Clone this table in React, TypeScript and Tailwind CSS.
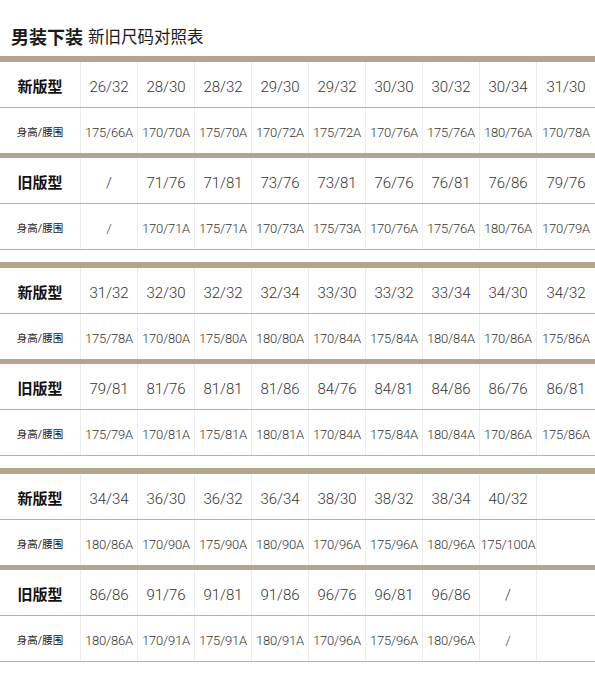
import React from "react";

type Section = {
  newSizes: string[];
  newBody: string[];
  oldSizes: string[];
  oldBody: string[];
};

const sections: Section[] = [
  {
    newSizes: ["26/32", "28/30", "28/32", "29/30", "29/32", "30/30", "30/32", "30/34", "31/30"],
    newBody: ["175/66A", "170/70A", "175/70A", "170/72A", "175/72A", "170/76A", "175/76A", "180/76A", "170/78A"],
    oldSizes: ["/", "71/76", "71/81", "73/76", "73/81", "76/76", "76/81", "76/86", "79/76"],
    oldBody: ["/", "170/71A", "175/71A", "170/73A", "175/73A", "170/76A", "175/76A", "180/76A", "170/79A"],
  },
  {
    newSizes: ["31/32", "32/30", "32/32", "32/34", "33/30", "33/32", "33/34", "34/30", "34/32"],
    newBody: ["175/78A", "170/80A", "175/80A", "180/80A", "170/84A", "175/84A", "180/84A", "170/86A", "175/86A"],
    oldSizes: ["79/81", "81/76", "81/81", "81/86", "84/76", "84/81", "84/86", "86/76", "86/81"],
    oldBody: ["175/79A", "170/81A", "175/81A", "180/81A", "170/84A", "175/84A", "180/84A", "170/86A", "175/86A"],
  },
  {
    newSizes: ["34/34", "36/30", "36/32", "36/34", "38/30", "38/32", "38/34", "40/32", ""],
    newBody: ["180/86A", "170/90A", "175/90A", "180/90A", "170/96A", "175/96A", "180/96A", "175/100A", ""],
    oldSizes: ["86/86", "91/76", "91/81", "91/86", "96/76", "96/81", "96/86", "/", ""],
    oldBody: ["180/86A", "170/91A", "175/91A", "180/91A", "170/96A", "175/96A", "180/96A", "/", ""],
  },
];

const Row = ({ label, values, body }: { label: string; values: string[]; body?: boolean }) => {
  const pad = body ? "pt-[4px]" : "pt-[6px]";
  return (
    <div className="flex h-[45px]">
      <div className={`w-[81px] shrink-0 border-r border-[#ececec] flex items-center justify-center ${pad}`}>
        {body ? (
          <span className="text-[10.5px] text-[#222]">{label}</span>
        ) : (
          <span className="text-[15px] font-bold text-[#111]">{label}</span>
        )}
      </div>
      {values.map((v, i) => (
        <div
          key={i}
          className={
            i === values.length - 1
              ? `flex-1 flex items-center justify-center whitespace-nowrap ${pad}`
              : `w-[57px] shrink-0 border-r border-[#ececec] flex items-center justify-center whitespace-nowrap ${pad}`
          }
        >
          <span className={body ? "text-[13px] font-light text-[#333] tracking-[-0.2px]" : "text-[15px] font-light text-[#333]"}>
            {v}
          </span>
        </div>
      ))}
    </div>
  );
};

export default function App() {
  return (
    <div className="w-[595px] h-[682px] bg-white font-['Roboto','Noto_Sans_CJK_SC',sans-serif] overflow-hidden">
      {/* title */}
      <div className="h-[56px] flex items-center gap-[5px] pl-[11px] pt-[17px] text-[#1a1a1a]">
        <span className="text-[18px] font-bold font-['Noto_Sans_CJK_SC',sans-serif]">男装下装</span>
        <span className="text-[16.5px] font-['Noto_Sans_CJK_SC',sans-serif]">新旧尺码对照表</span>
      </div>

      <div className="flex flex-col gap-[12px]">
        {sections.map((s, i) => (
          <div key={i} className="border-t-[6px] border-[#b4a591]">
            <div className="border-b border-[#bcae9c]">
              <Row label="新版型" values={s.newSizes} />
            </div>
            <Row label="身高/腰围" values={s.newBody} body />
            <div className="h-[5px] bg-[#b4a591]" />
            <div className="border-b border-[#bcae9c]">
              <Row label="旧版型" values={s.oldSizes} />
            </div>
            <div className="border-b border-[#bcae9c]">
              <Row label="身高/腰围" values={s.oldBody} body />
            </div>
          </div>
        ))}
      </div>
    </div>
  );
}
